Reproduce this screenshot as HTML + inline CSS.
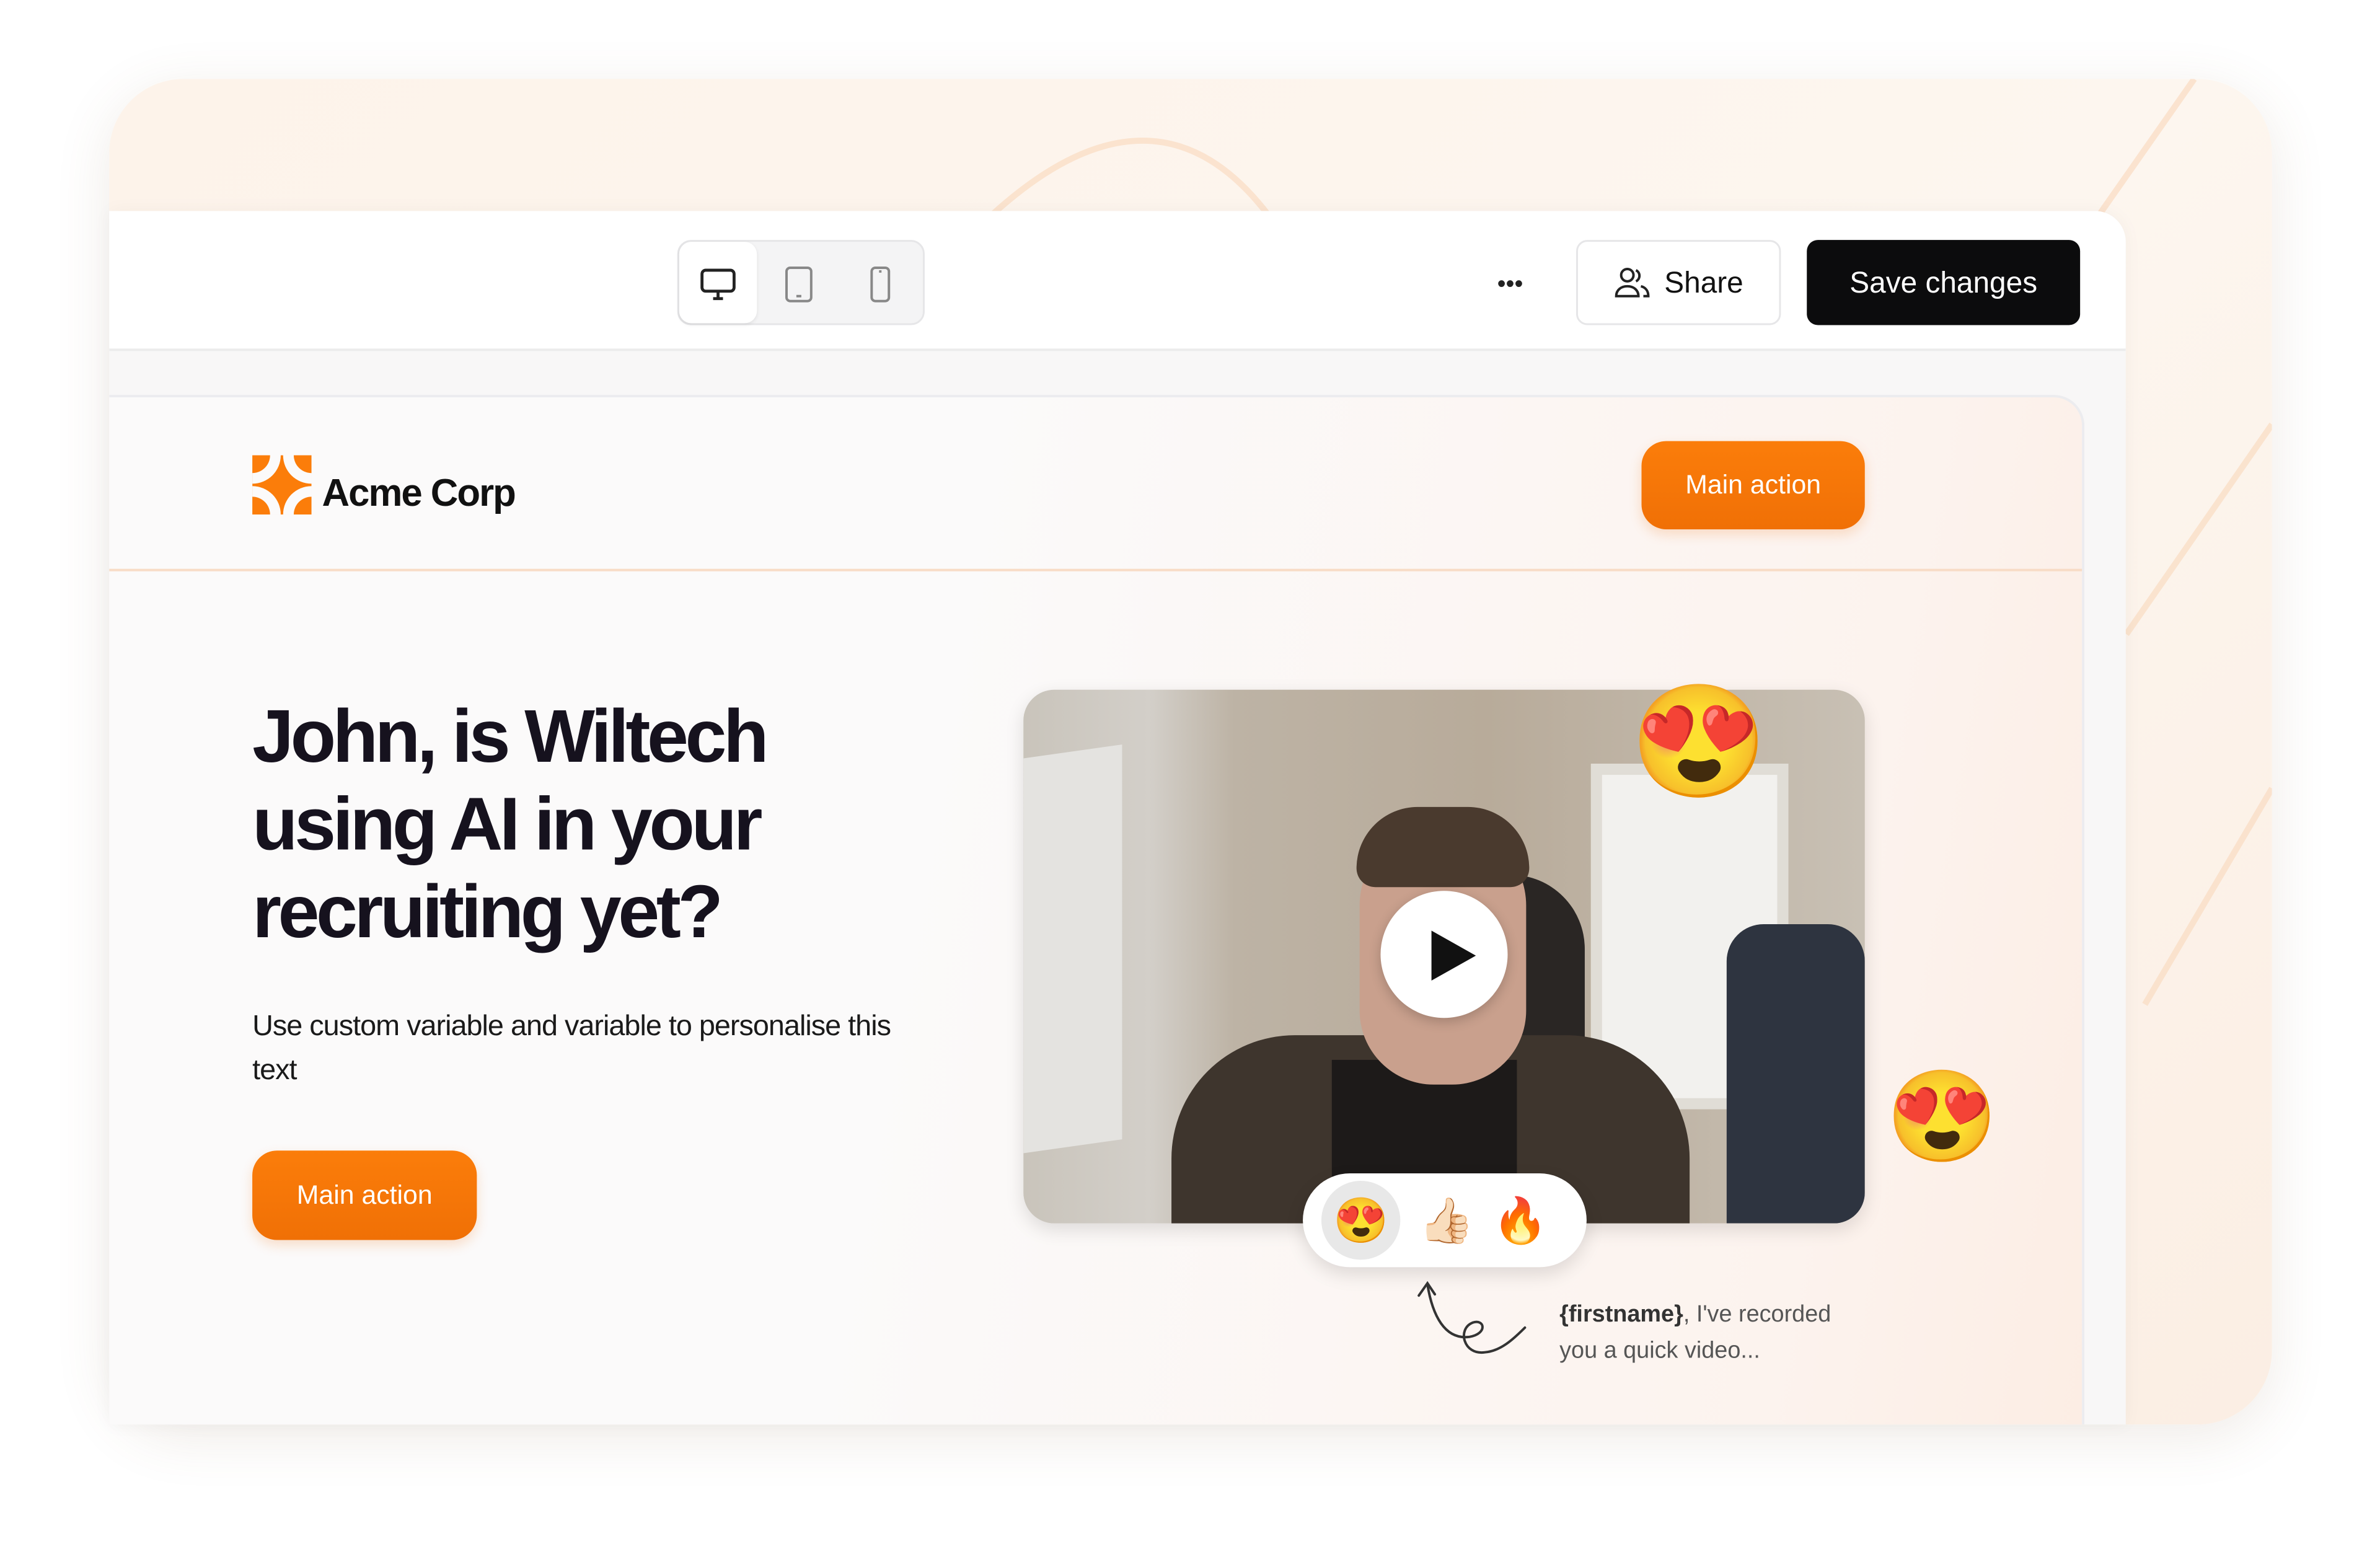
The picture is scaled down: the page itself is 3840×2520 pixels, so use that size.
<!DOCTYPE html>
<html><head><meta charset="utf-8"><style>
*{margin:0;padding:0;box-sizing:border-box}
body{width:3840px;height:2520px;background:#fff;position:relative;overflow:hidden;font-family:"Liberation Sans","DejaVu Sans",sans-serif}
#wrap{position:absolute;left:0;top:0;width:3840px;height:2520px;transform:scale(0.9953);transform-origin:0 0}
.abs{position:absolute}
.emo{font-family:"Noto Color Emoji",sans-serif;display:flex;align-items:center;justify-content:center;line-height:1}
#outer{left:177px;top:128px;width:3506px;height:2181px;border-radius:120px;background:linear-gradient(135deg,#fdf3ea,#fdf6ef 60%,#fbeee3);box-shadow:0 20px 90px rgba(120,90,60,.12);overflow:hidden}
#panel{left:177px;top:342px;width:3269px;height:1967px;background:#f8f7f7;border-top-right-radius:50px;overflow:hidden;box-shadow:0 0 30px rgba(0,0,0,.04)}
#toolbar{left:0;top:0;width:100%;height:227px;background:#fff;border-bottom:4px solid #ececec}
.btn{position:absolute;display:flex;align-items:center;justify-content:center}
#card{left:0;top:298px;width:3202px;height:1700px;background:linear-gradient(100deg,#fbfafa 40%,#fcf3ee 85%,#fcede4);border-top-right-radius:50px;border:4px solid #ececef;border-left:none}
.orange{background:linear-gradient(180deg,#fb7d0a,#f07006);color:#fff;font-size:43px;border-radius:40px;box-shadow:0 8px 20px rgba(240,110,10,.2)}
h1{font-size:121px;line-height:142px;font-weight:700;letter-spacing:-5.5px;color:#16121e}
</style></head><body><div id="wrap">
<div id="outer" class="abs">
<svg class="abs" style="left:0;top:0" width="3506" height="2181"><g fill="none" stroke="#f9dcc2" stroke-width="10" opacity=".7">
<path d="M1400 250 Q1700 -50 1900 250"/><path d="M3100 400 L3380 0"/><path d="M3270 900 L3506 560"/><path d="M3300 1500 L3506 1150"/></g></svg>
</div>
<div id="panel" class="abs">
 <div id="toolbar" class="abs">
  <div class="abs" style="left:921px;top:47px;width:401px;height:138px;border-radius:22px;background:#f4f4f5;border:3px solid #e6e6e8"></div>
  <div class="abs" style="left:924px;top:50px;width:126px;height:132px;border-radius:20px;background:#fff;box-shadow:0 2px 6px rgba(0,0,0,.08)"></div>
  <svg class="abs" style="left:955px;top:90px" width="64" height="60" viewBox="0 0 32 30" fill="none" stroke="#222" stroke-width="2.4"><rect x="3" y="3" width="26" height="17" rx="3"/><path d="M12 26h8M16 20v6"/></svg>
  <svg class="abs" style="left:1090px;top:88px" width="56" height="62" viewBox="0 0 28 31" fill="none" stroke="#888" stroke-width="2"><rect x="4" y="2" width="20" height="27" rx="3"/><path d="M12 25h4"/></svg>
  <svg class="abs" style="left:1228px;top:88px" width="44" height="62" viewBox="0 0 22 31" fill="none" stroke="#888" stroke-width="2"><rect x="4" y="2" width="14" height="27" rx="3"/><path d="M10 5h2"/></svg>
  <div class="abs" style="left:2250px;top:108px;font-size:40px;color:#222;line-height:20px">•••</div>
  <div class="btn" style="left:2378px;top:47px;width:332px;height:138px;border:3px solid #e6e6e8;border-radius:18px;font-size:48px;color:#111;gap:22px;background:#fff"><svg width="60" height="56" viewBox="0 0 30 28" fill="none" stroke="#222" stroke-width="2"><circle cx="11" cy="8" r="5"/><path d="M2 25c0-5 4-8 9-8s9 3 9 8z"/><path d="M18 4a5 5 0 010 9M22 17c4 1 6 4 6 8h-4"/></svg>Share</div>
  <div class="btn" style="left:2752px;top:47px;width:443px;height:138px;background:#0c0c0d;border-radius:18px;font-size:48px;color:#fff">Save changes</div>
 </div>
 <div id="card" class="abs">
  <div class="abs" style="left:0;top:278px;width:100%;height:4px;background:#f8dcc6"></div>
  <svg class="abs" style="left:232px;top:94px" width="96" height="96" viewBox="0 0 100 100"><defs><clipPath id="c"><rect width="100" height="100"/></clipPath></defs><g clip-path="url(#c)"><rect width="100" height="100" fill="#fb7d0a"/><g fill="#fbfafa"><circle cx="0" cy="0" r="48"/><circle cx="100" cy="0" r="48"/><circle cx="0" cy="100" r="48"/><circle cx="100" cy="100" r="48"/></g><g fill="#fb7d0a"><circle cx="0" cy="0" r="30"/><circle cx="100" cy="0" r="30"/><circle cx="0" cy="100" r="30"/><circle cx="100" cy="100" r="30"/></g></g></svg>
  <div class="abs" style="left:345px;top:120px;font-size:62px;font-weight:700;color:#111;letter-spacing:-2px">Acme Corp</div>
  <div class="btn orange" style="left:2484px;top:71px;width:362px;height:143px">Main action</div>
  <div class="abs" style="left:232px;top:478px;width:900px"><h1>John, is Wiltech using AI in your recruiting yet?</h1></div>
  <div class="abs" style="left:232px;top:982px;width:1100px;font-size:47px;line-height:71px;color:#1a1a1a;letter-spacing:-1px">Use custom variable and variable to personalise this text</div>
  <div class="btn orange" style="left:232px;top:1221px;width:364px;height:145px">Main action</div>
  <div class="abs" style="left:1482px;top:474px;width:1364px;height:865px;border-radius:50px;overflow:hidden;background:linear-gradient(90deg,#c9c4bb 0,#d3cfc9 15%,#bdb3a5 25%,#b8ab9a 55%,#c8c0b4 100%);box-shadow:0 10px 30px rgba(0,0,0,.12)">
   <div class="abs" style="left:0;top:100px;width:160px;height:640px;background:#e4e3e0;transform:skewY(-8deg)"></div>
   <div class="abs" style="left:920px;top:120px;width:320px;height:560px;background:#f2f1ee;border:18px solid #e0ddd6"></div>
   <div class="abs" style="left:1140px;top:380px;width:224px;height:485px;background:#2e3440;border-radius:60px 60px 0 0"></div>
   <div class="abs" style="left:580px;top:300px;width:330px;height:560px;background:#2a2624;border-radius:120px 120px 0 0"></div>
   <div class="abs" style="left:240px;top:560px;width:840px;height:420px;background:#3e352d;border-radius:200px 200px 0 0"></div>
   <div class="abs" style="left:500px;top:600px;width:300px;height:300px;background:#1d1a19"></div>
   <div class="abs" style="left:545px;top:220px;width:270px;height:420px;background:#c9a08d;border-radius:130px 130px 120px 120px"></div>
   <div class="abs" style="left:540px;top:190px;width:280px;height:130px;background:#4a3a2e;border-radius:130px 130px 40px 40px"></div>
  </div>
  <div class="abs" style="left:2061px;top:800px;width:206px;height:206px;border-radius:50%;background:#fff;box-shadow:0 6px 20px rgba(0,0,0,.2)"></div>
  <svg class="abs" style="left:2130px;top:860px" width="90" height="90" viewBox="0 0 10 10"><path d="M1.5 0.5L9.5 5L1.5 9.5z" fill="#111"/></svg>
  <div class="abs emo" style="left:2467px;top:449px;width:220px;height:220px;font-size:180px">😍</div>
  <div class="abs emo" style="left:2881px;top:1077px;width:180px;height:180px;font-size:146px">😍</div>
  <div class="abs" style="left:1935px;top:1258px;width:460px;height:152px;border-radius:76px;background:#fff;box-shadow:0 12px 30px rgba(0,0,0,.12);display:flex;align-items:center;gap:30px;padding-left:38px;font-size:72px;font-family:'Noto Color Emoji',sans-serif">
   <div style="width:128px;height:128px;border-radius:50%;background:#e8e8e8;display:flex;align-items:center;justify-content:center;margin-left:-8px">😍</div><div>👍🏻</div><div>🔥</div></div>
  <svg class="abs" style="left:2115px;top:1428px" width="200" height="150" viewBox="0 0 200 150" fill="none" stroke="#333" stroke-width="4" stroke-linecap="round"><path d="M22 10 C30 60 50 100 90 95 C120 90 115 65 95 72 C70 82 80 125 115 120 C140 118 160 100 180 80"/><path d="M8 28 L22 8 L34 26"/></svg>
  <div class="abs" style="left:2351px;top:1457px;font-size:38px;line-height:59px;color:#555"><b style="color:#333">{firstname}</b>, I've recorded<br>you a quick video...</div>
 </div>
</div>
</div></body></html>
